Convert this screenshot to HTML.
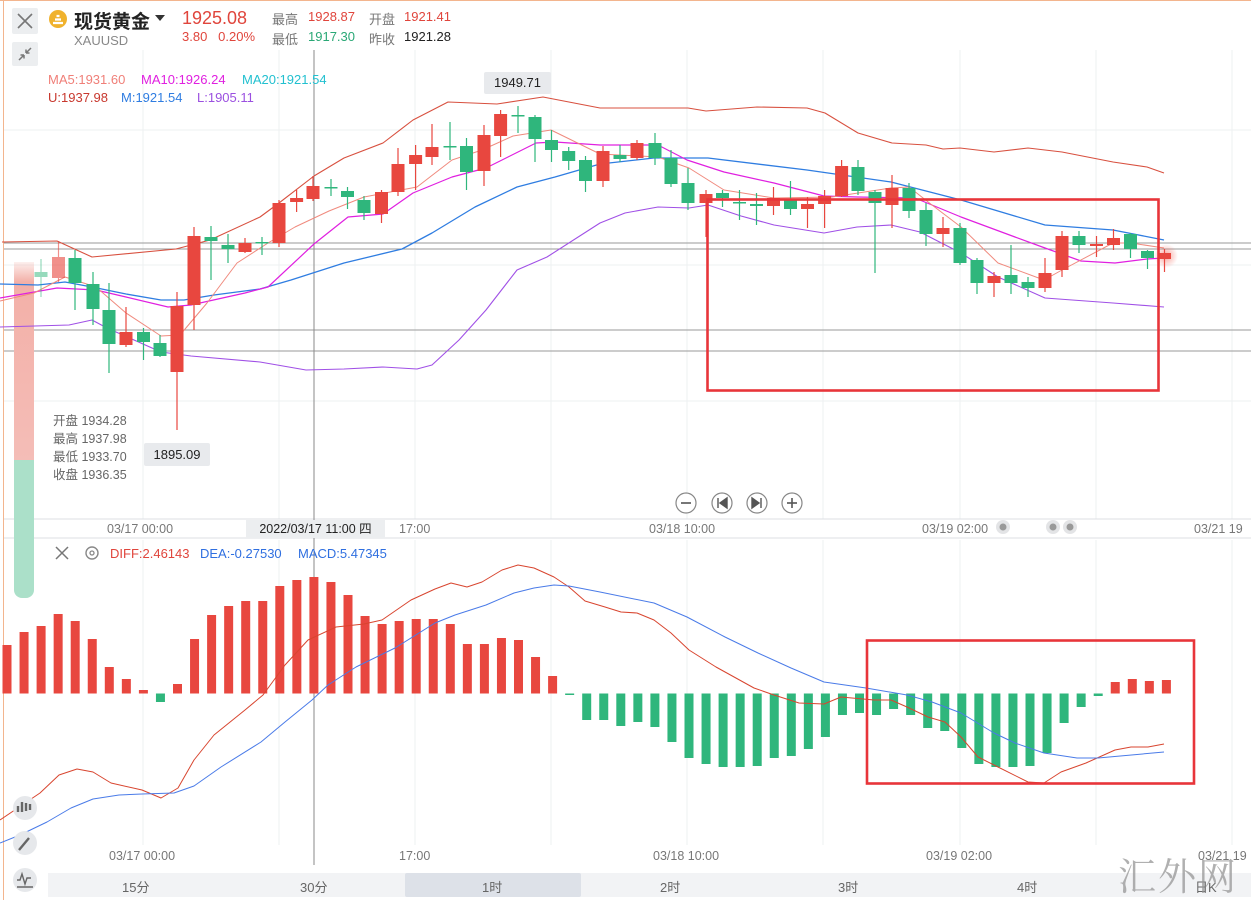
<!DOCTYPE html>
<html><head><meta charset="utf-8"><style>
html,body{margin:0;padding:0;background:#fff;width:1251px;height:900px;overflow:hidden;font-family:"Liberation Sans","Noto Sans CJK SC",sans-serif}
.a{position:absolute;white-space:nowrap}
</style></head><body>
<div style="position:relative;width:1251px;height:900px">
<svg id="s" width="1251" height="900" style="position:absolute;left:0;top:0" xmlns="http://www.w3.org/2000/svg"></svg>

<!-- header -->
<div class="a" style="left:12px;top:8px;width:26px;height:26px;background:#eceef0;border-radius:2px"></div>
<svg class="a" style="left:12px;top:8px" width="26" height="26"><path d="M6 6L20 20M20 6L6 20" stroke="#777" stroke-width="1.6"/></svg>
<div class="a" style="left:12px;top:42px;width:26px;height:24px;background:#eceef0;border-radius:2px"></div>
<svg class="a" style="left:12px;top:42px" width="26" height="24"><path d="M7 18L12 13M12 13v3.5M12 13h-3.5M19 6L14 11M14 11v-3.5M14 11h3.5" stroke="#777" stroke-width="1.5" fill="none"/></svg>
<svg class="a" style="left:49px;top:10px" width="18" height="18"><circle cx="9" cy="9" r="9" fill="#f0b22d"/><path d="M4 13h10M6 9.5h6M7.5 6h3" stroke="#fff" stroke-width="2.2"/></svg>
<div class="a" style="left:74px;top:7px;font-size:19px;font-weight:bold;color:#222">现货黄金</div>
<svg class="a" style="left:155px;top:14px" width="10" height="8"><path d="M0 1h10L5 7z" fill="#333"/></svg>
<div class="a" style="left:182px;top:8px;font-size:18px;color:#e0453c">1925.08</div>
<div class="a" style="left:74px;top:33px;font-size:13px;color:#888">XAUUSD</div>
<div class="a" style="left:182px;top:29px;font-size:13px;color:#e0453c">3.80&nbsp;&nbsp;&nbsp;0.20%</div>
<div class="a" style="left:272px;top:9px;font-size:13px;color:#777">最高</div>
<div class="a" style="left:308px;top:9px;font-size:13px;color:#e0453c">1928.87</div>
<div class="a" style="left:369px;top:9px;font-size:13px;color:#777">开盘</div>
<div class="a" style="left:404px;top:9px;font-size:13px;color:#e0453c">1921.41</div>
<div class="a" style="left:272px;top:29px;font-size:13px;color:#777">最低</div>
<div class="a" style="left:308px;top:29px;font-size:13px;color:#2aa876">1917.30</div>
<div class="a" style="left:369px;top:29px;font-size:13px;color:#777">昨收</div>
<div class="a" style="left:404px;top:29px;font-size:13px;color:#222">1921.28</div>

<div class="a" style="left:48px;top:72px;font-size:13px;color:#f07f78">MA5:1931.60</div>
<div class="a" style="left:141px;top:72px;font-size:13px;color:#e020e0">MA10:1926.24</div>
<div class="a" style="left:242px;top:72px;font-size:13px;color:#22c0d0">MA20:1921.54</div>
<div class="a" style="left:48px;top:90px;font-size:13px;color:#c8382e">U:1937.98</div>
<div class="a" style="left:121px;top:90px;font-size:13px;color:#2f7de1">M:1921.54</div>
<div class="a" style="left:197px;top:90px;font-size:13px;color:#9b50e0">L:1905.11</div>

<div class="a" style="left:484px;top:72px;width:67px;height:22px;background:#e8eaed;border-radius:2px;font-size:13px;line-height:22px;text-align:center;color:#222">1949.71</div>
<div class="a" style="left:144px;top:443px;width:66px;height:23px;background:#e8eaed;border-radius:2px;font-size:13px;line-height:23px;text-align:center;color:#222">1895.09</div>

<div class="a" style="left:53px;top:412px;font-size:12.5px;color:#666;line-height:18px">开盘 1934.28<br>最高 1937.98<br>最低 1933.70<br>收盘 1936.35</div>

<div class="a" style="left:107px;top:522px;font-size:12.5px;color:#777">03/17 00:00</div>
<div class="a" style="left:246px;top:520px;width:139px;height:18px;background:#eceef0;font-size:12.5px;line-height:18px;text-align:center;color:#222">2022/03/17 11:00 四</div>
<div class="a" style="left:399px;top:522px;font-size:12.5px;color:#777">17:00</div>
<div class="a" style="left:649px;top:522px;font-size:12.5px;color:#777">03/18 10:00</div>
<div class="a" style="left:922px;top:522px;font-size:12.5px;color:#777">03/19 02:00</div>
<div class="a" style="left:1194px;top:522px;font-size:12.5px;color:#777">03/21 19</div>

<div class="a" style="left:110px;top:546px;font-size:13px;color:#e0453c">DIFF:2.46143</div>
<div class="a" style="left:200px;top:546px;font-size:13px;color:#2f6fe0">DEA:-0.27530</div>
<div class="a" style="left:298px;top:546px;font-size:13px;color:#2f6fe0">MACD:5.47345</div>

<div class="a" style="left:109px;top:849px;font-size:12.5px;color:#777">03/17 00:00</div>
<div class="a" style="left:399px;top:849px;font-size:12.5px;color:#777">17:00</div>
<div class="a" style="left:653px;top:849px;font-size:12.5px;color:#777">03/18 10:00</div>
<div class="a" style="left:926px;top:849px;font-size:12.5px;color:#777">03/19 02:00</div>
<div class="a" style="left:1198px;top:849px;font-size:12.5px;color:#777">03/21 19</div>

<!-- tab bar -->
<div class="a" style="left:48px;top:873px;width:1203px;height:24px;background:#f2f3f5"></div>
<div class="a" style="left:405px;top:873px;width:176px;height:24px;background:#dde1e8;border-radius:2px"></div>
<div class="a" style="left:0;top:877px;width:1251px;font-size:13px;color:#666">
<span class="a" style="left:122px">15分</span><span class="a" style="left:300px">30分</span><span class="a" style="left:482px">1时</span><span class="a" style="left:660px">2时</span><span class="a" style="left:838px">3时</span><span class="a" style="left:1017px">4时</span><span class="a" style="left:1195px">日K</span></div>
<div class="a" style="left:1118px;top:846px;font-size:38px;color:rgba(150,150,150,0.75);font-family:'Noto Serif CJK SC',serif;letter-spacing:2px">汇外网</div>
</div>
<script>
var S='';
function L(x1,y1,x2,y2,c,w){S+='<line x1="'+x1+'" y1="'+y1+'" x2="'+x2+'" y2="'+y2+'" stroke="'+c+'" stroke-width="'+(w||1)+'"/>';}
function P(pts,c,w){S+='<polyline fill="none" stroke="'+c+'" stroke-width="'+(w||1)+'" stroke-linejoin="round" points="'+pts.map(function(p){return p.join(',')}).join(' ')+'"/>';}
// borders
L(0,0.5,1251,0.5,'#f3b58e',1);L(3.5,0,3.5,900,'#f3b58e',1);
// grid
[130,265,401].forEach(function(y){L(4,y,1251,y,'#eef0f2')});
[143,279,415,551,687,823,960,1096,1232].forEach(function(x){L(x,50,x,519,'#eef0f2');L(x,540,x,845,'#eef0f2')});
L(4,519,1251,519,'#dcdfe3');L(4,538,1251,538,'#dcdfe3');
[243,249,330,351].forEach(function(y){L(4,y,1251,y,'#9a9a9a')});
L(314,50,314,865,'#8a8a8a');
// left bar
S+='<defs><linearGradient id="gp" x1="0" y1="0" x2="0" y2="1"><stop offset="0" stop-color="#f3b0a8" stop-opacity="0.2"/><stop offset="0.1" stop-color="#f3b0a8"/><stop offset="1" stop-color="#f4bdb7"/></linearGradient><radialGradient id="gl"><stop offset="0" stop-color="#f36a5e" stop-opacity="0.6"/><stop offset="1" stop-color="#f36a5e" stop-opacity="0"/></radialGradient></defs>';
S+='<rect x="14" y="262" width="20" height="198" fill="url(#gp)"/><path d="M14 460h20v130a8 8 0 0 1-8 8h-4a8 8 0 0 1-8-8z" fill="#abe0c9"/>';
// bands and MAs
P([[2,242],[57,241],[92,257],[176,249],[210,240],[260,217],[279,203],[314,176],[344,158],[383,143],[413,120],[448,102],[497,104],[543,97],[600,108],[688,108],[706,111],[757,107],[807,108],[825,113],[858,133],[892,143],[926,145],[943,149],[960,148],[994,152],[1028,148],[1062,152],[1113,162],[1147,167],[1164,173]],'#d8503f',1.1);
P([[0,327],[69,325],[92,320],[107,328],[161,352],[191,356],[260,362],[306,370],[344,369],[383,367],[417,369],[432,365],[459,340],[486,310],[517,270],[547,257],[600,223],[625,213],[658,207],[689,208],[708,205],[741,216],[774,225],[824,233],[857,227],[891,225],[920,232],[961,253],[998,277],[1045,298],[1113,303],[1164,307]],'#a050e6',1.1);
P([[0,284],[38,285],[65,282],[92,287],[126,294],[161,300],[184,300],[214,295],[260,289],[291,280],[344,263],[402,249],[432,233],[475,207],[517,187],[555,177],[600,164],[654,158],[708,158],[807,170],[891,182],[961,200],[1045,225],[1113,230],[1164,240]],'#2f7de1',1.3);
P([[0,298],[57,288],[96,290],[126,297],[168,307],[191,305],[245,293],[268,287],[314,244],[348,217],[383,214],[413,193],[452,177],[486,168],[536,143],[555,142],[600,145],[658,145],[687,160],[724,172],[774,183],[824,196],[857,197],[915,198],[961,217],[1015,237],[1045,248],[1081,261],[1115,263],[1147,259],[1164,258]],'#e020e0',1.2);
P([[0,301],[34,293],[65,277],[96,287],[126,313],[161,336],[180,335],[207,303],[237,263],[268,243],[295,227],[329,211],[364,197],[417,187],[452,160],[482,150],[513,136],[551,130],[600,154],[658,157],[689,168],[724,190],[774,198],[832,197],[891,188],[909,187],[932,205],[961,227],[998,263],[1044,280],[1062,270],[1113,243],[1131,243],[1164,248]],'#f08a7e',1);
// candles
var C=[[41,272,277,259,297,'g',.5],[58.5,257,278,241,282,'r',.6],[75,258,283,250,310,'g'],[93,284,309,272,325,'g'],[109,310,344,283,373,'g'],[126,332,345,307,347,'r'],[143.5,332,342,328,360,'g'],[160,343,356,335,357,'g'],[177,306,372,292,430,'r'],[194,236,305,227,330,'r'],[211,237,241,226,280,'g'],[228,245,249,234,263,'g'],[245,243,252,238,253,'r'],[262,242,243,237,255,'g'],[279,203,243,200,247,'r'],[296.6,198,202,190,212,'r'],[313,186,199,176,201,'r'],[331,187,188,179,196,'g'],[347.5,191,197,187,209,'g'],[364,200,213,196,220,'g'],[381.5,192,214,190,223,'r'],[398,164,192,148,196,'r'],[415.6,155,164,145,190,'r'],[432,147,157,124,165,'r'],[450,146,147,122,160,'g'],[466.5,146,172,138,190,'g'],[484,135,171,125,186,'r'],[500.6,114,136,110,157,'r'],[518,115,116,106,133,'g'],[535,117,139,115,162,'g'],[551.5,140,150,130,162,'g'],[568.7,151,161,147,170,'g'],[585.5,160,181,156,192,'g'],[603,151,181,146,187,'r'],[620,155,159,145,162,'g'],[637,143,158,140,160,'r'],[655,143,158,133,165,'g'],[671,158,184,150,187,'g'],[688,183,203,168,210,'g'],[706,194,203,190,237,'r'],[722.5,193,198,190,207,'g'],[739.5,202,203,190,220,'g'],[756.5,204,206,193,225,'g'],[773.5,198,206,187,215,'r'],[790.5,200,209,181,215,'g'],[807.5,204,209,197,228,'r'],[824.6,196,204,190,228,'r'],[841.6,166,196,160,197,'r'],[858,167,191,160,195,'g'],[875,192,203,190,273,'g'],[892,188,205,175,228,'r'],[909,188,211,183,218,'g'],[926,210,234,203,246,'g'],[943,228,234,217,247,'r'],[960,228,263,223,265,'g'],[977,260,283,258,294,'g'],[994,276,283,272,297,'r'],[1011,275,283,245,294,'g'],[1028,282,288,277,297,'g'],[1045,273,288,258,292,'r'],[1062,236,270,231,277,'r'],[1079,236,245,231,253,'g'],[1096.5,244,246,236,257,'r'],[1113.5,238,245,229,250,'r'],[1130.5,234,249,233,258,'g'],[1147.5,251,258,250,269,'g'],[1164.5,253,259,249,272,'r']];
S+='<circle cx="1166" cy="256" r="12" fill="url(#gl)"/>';
C.forEach(function(c){var col=c[5]=='r'?'#e8473f':'#2fb67c';var o=c[6]||1;var h=Math.max(1.5,c[2]-c[1]);
S+='<g opacity="'+o+'"><line x1="'+c[0]+'" y1="'+c[3]+'" x2="'+c[0]+'" y2="'+c[4]+'" stroke="'+col+'" stroke-width="1.2"/><rect x="'+(c[0]-6.5)+'" y="'+c[1]+'" width="13" height="'+h+'" fill="'+col+'"/></g>';});
// red box main
S+='<rect x="707.5" y="199.5" width="451" height="191" fill="none" stroke="#e8353a" stroke-width="2.6"/>';
// zoom buttons
[686,722,757,792].forEach(function(x,i){S+='<circle cx="'+x+'" cy="503" r="10" fill="#fff" stroke="#888" stroke-width="1.2"/>';
if(i==0)L(681,503,691,503,'#555',1.6);
if(i==3){L(787,503,797,503,'#555',1.6);L(792,498,792,508,'#555',1.6);}
if(i==1)S+='<path d="M718 498v10M727 498l-7 5 7 5z" stroke="#555" stroke-width="1.4" fill="#555"/>';
if(i==2)S+='<path d="M761 498v10M752 498l7 5-7 5z" stroke="#555" stroke-width="1.4" fill="#555"/>';});
[[1003,527],[1053,527],[1070,527]].forEach(function(p){S+='<circle cx="'+p[0]+'" cy="'+p[1]+'" r="7" fill="#e3e4e6"/><circle cx="'+p[0]+'" cy="'+p[1]+'" r="3.5" fill="#999"/>';});
// macd header icons
S+='<path d="M56 547l12 12M68 547l-12 12" stroke="#777" stroke-width="1.5"/><circle cx="92" cy="553" r="6" fill="none" stroke="#888" stroke-width="1.4"/><circle cx="92" cy="553" r="2" fill="none" stroke="#888" stroke-width="1.3"/>';
// macd bars
var B=[645,632,626,614,621,639,667,679,690,-702,684,639,615,606,601,601,586,580,577,582,595,616,624,621,619,619,624,644,644,638,640,657,676,-695,-720,-720,-726,-722,-727,-742,-758,-764,-767,-767,-766,-758,-756,-749,-737,-715,-713,-715,-709,-715,-728,-731,-748,-764,-767,-767,-766,-753,-723,-707,-696,682,679,681,680];
B.forEach(function(v,j){var x=7+17.05*j;if(v>0){S+='<rect x="'+(x-4.5)+'" y="'+v+'" width="9" height="'+(693.5-v)+'" fill="#e8473f"/>';}else{v=-v;S+='<rect x="'+(x-4.5)+'" y="693.5" width="9" height="'+Math.max(1.5,v-693.5)+'" fill="#2fb67c"/>';}});
P([[0,820],[40,793],[59,775],[77,769],[93,772],[111,783],[142,790],[161,798],[178,788],[194,760],[214,735],[245,710],[263,695],[285,665],[308,640],[336,627],[364,624],[382,620],[411,600],[435,589],[451,583],[467,587],[482,582],[502,570],[518,565],[534,568],[554,577],[569,587],[585,601],[605,607],[621,612],[637,613],[654,620],[671,633],[689,650],[716,667],[754,688],[774,695],[799,703],[824,704],[841,697],[874,700],[891,700],[907,707],[928,717],[945,722],[961,737],[978,757],[998,767],[1028,782],[1044,783],[1061,772],[1086,763],[1115,750],[1131,747],[1148,747],[1164,744]],'#d8452f',1);
P([[0,843],[20,835],[47,822],[71,808],[93,799],[119,795],[142,794],[174,793],[194,786],[221,767],[261,742],[285,722],[312,700],[328,685],[356,667],[395,648],[435,623],[455,615],[486,605],[514,593],[534,588],[554,585],[569,586],[600,592],[654,603],[687,617],[725,637],[758,653],[791,668],[824,682],[866,688],[907,695],[932,702],[961,713],[994,733],[1015,743],[1044,753],[1077,758],[1098,758],[1164,752]],'#4a7be8',1);
S+='<rect x="867" y="640.5" width="327" height="143" fill="none" stroke="#e8353a" stroke-width="2.6"/>';
// left tool icons
[808,843,880].forEach(function(y){S+='<circle cx="25" cy="'+y+'" r="12" fill="#e6e8eb"/>';});
S+='<path d="M18 806v6M22 802v10M26 803v8M30 804v6" stroke="#666" stroke-width="2.4"/><path d="M19 850l10-12" stroke="#666" stroke-width="2.4"/><path d="M17 880l3 0 2-6 3 10 2-6 4 0M17 887h16" stroke="#666" stroke-width="1.4" fill="none"/>';
document.getElementById('s').innerHTML=S;
</script>
</body></html>
